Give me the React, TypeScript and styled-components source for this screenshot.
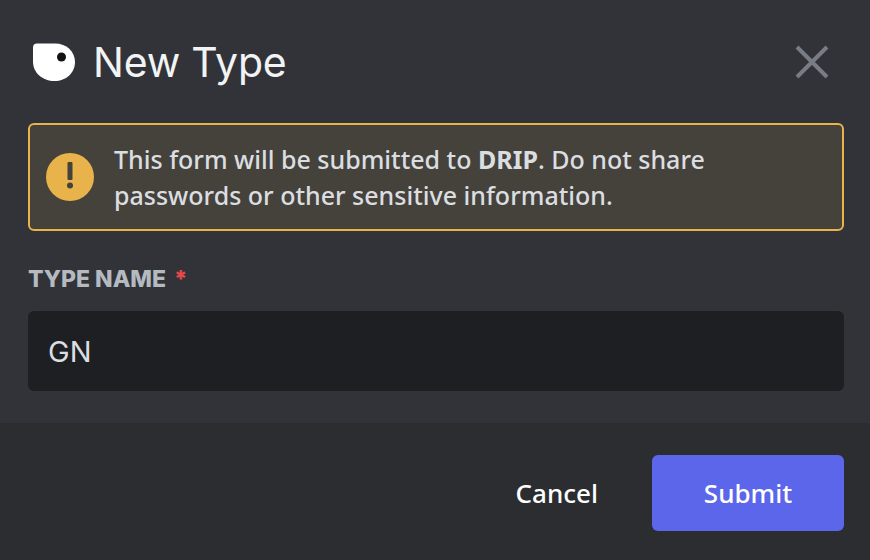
import styled, { createGlobalStyle } from "styled-components";

const GlobalStyle = createGlobalStyle`
  html, body {
    margin: 0;
    padding: 0;
    background: #313338;
  }
`;

const Modal = styled.div`
  width: 870px;
  height: 560px;
  display: flex;
  flex-direction: column;
  background: #313338;
  font-family: "Noto Sans", sans-serif;
  overflow: hidden;
`;

const Header = styled.div`
  height: 123px;
  box-sizing: border-box;
  padding: 0 41px 0 32px;
  display: flex;
  align-items: center;
  justify-content: space-between;
  flex-shrink: 0;
`;

const TitleGroup = styled.div`
  display: flex;
  align-items: center;
  gap: 16px;
`;

const Title = styled.h1`
  margin: 0;
  font-family: "Inter", sans-serif;
  font-size: 41px;
  line-height: 50px;
  font-weight: 400;
  letter-spacing: -0.2px;
  color: #f2f3f5;
`;

const Body = styled.div`
  flex: 1;
  padding: 0 26px 0 28px;
`;

const Notice = styled.div`
  height: 108px;
  box-sizing: border-box;
  display: flex;
  align-items: center;
  gap: 20px;
  padding: 0 16px;
  background: #45423c;
  border: 2px solid #e8b34b;
  border-radius: 6px;
`;

const NoticeText = styled.div`
  font-size: 25px;
  line-height: 36px;
  font-weight: 500;
  color: #dbdee1;
  b {
    font-weight: 700;
  }
`;

const FieldLabel = styled.div`
  margin-top: 34px;
  font-family: "Inter", sans-serif;
  font-size: 23px;
  line-height: 28px;
  font-weight: 800;
  color: #b5bac1;
  display: flex;
  gap: 8px;
`;

const Required = styled.span`
  color: #e5484d;
`;

const Input = styled.div`
  margin-top: 18px;
  height: 80px;
  box-sizing: border-box;
  padding: 0 20px;
  display: flex;
  align-items: center;
  background: #1e1f22;
  border-radius: 6px;
  font-family: "Inter", sans-serif;
  font-size: 29px;
  color: #dbdee1;
`;

const Footer = styled.div`
  height: 137px;
  box-sizing: border-box;
  padding: 2px 26px 0 0;
  display: flex;
  align-items: center;
  justify-content: flex-end;
  gap: 54px;
  background: #2b2d31;
  flex-shrink: 0;
`;

const CancelButton = styled.div`
  font-size: 26px;
  font-weight: 500;
  color: #ffffff;
`;

const SubmitButton = styled.div`
  width: 192px;
  height: 76px;
  display: flex;
  align-items: center;
  justify-content: center;
  background: #5b66ea;
  border-radius: 6px;
  font-size: 26px;
  font-weight: 500;
  color: #ffffff;
`;

const AppIcon = () => (
  <svg width="45" height="40" viewBox="0 0 45 40">
    <path
      d="M1 5.500C1 3 2.500 1.500 5 1.500H23C34.500 1.500 43 9.500 43 20C43 31 34 39 22.500 39C10.500 39 1 31 1 19.500Z"
      fill="#ffffff"
    />
    <circle cx="29.500" cy="15" r="4.500" fill="#111214" />
  </svg>
);

const CloseIcon = () => (
  <svg width="34" height="34" viewBox="0 0 34 34">
    <path d="M2 2L32 32M32 2L2 32" stroke="#787c84" strokeWidth="4" fill="none" />
  </svg>
);

const WarningIcon = () => (
  <svg width="48" height="48" viewBox="0 0 48 48" style={{ flexShrink: 0 }}>
    <circle cx="24" cy="24" r="24" fill="#e8b34b" />
    <rect x="21.500" y="9" width="5" height="18" rx="1" fill="#45423c" />
    <circle cx="24" cy="32.500" r="3" fill="#45423c" />
  </svg>
);

export default function App() {
  return (
    <>
      <GlobalStyle />
      <Modal>
        <Header>
          <TitleGroup>
            <AppIcon />
            <Title>New Type</Title>
          </TitleGroup>
          <CloseIcon />
        </Header>
        <Body>
          <Notice>
            <WarningIcon />
            <NoticeText>
              This form will be submitted to <b>DRIP</b>. Do not share
              <br />
              passwords or other sensitive information.
            </NoticeText>
          </Notice>
          <FieldLabel>
            TYPE NAME <Required>*</Required>
          </FieldLabel>
          <Input>GN</Input>
        </Body>
        <Footer>
          <CancelButton>Cancel</CancelButton>
          <SubmitButton>Submit</SubmitButton>
        </Footer>
      </Modal>
    </>
  );
}
